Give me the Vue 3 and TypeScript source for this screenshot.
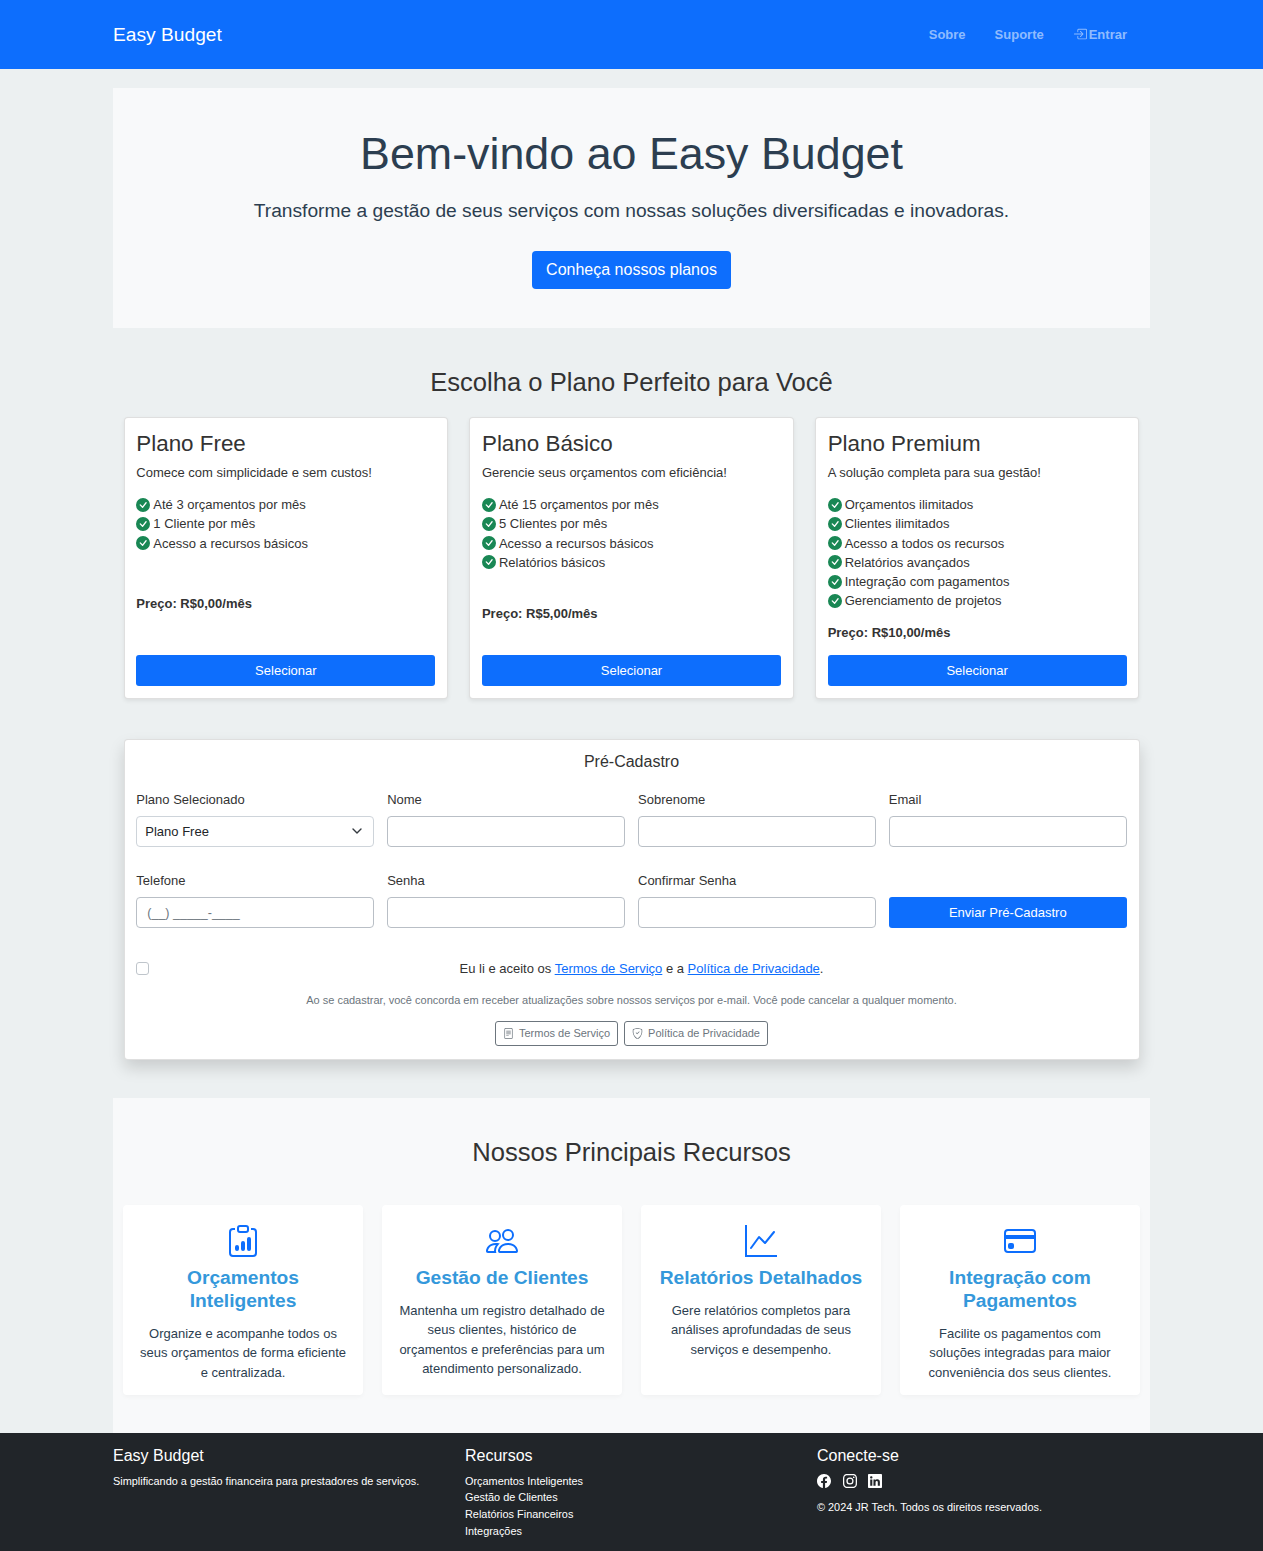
<script setup lang="ts">
const check = 'M16 8A8 8 0 1 1 0 8a8 8 0 0 1 16 0zm-3.97-3.03a.75.75 0 0 0-1.08.022L7.477 9.417 5.384 7.323a.75.75 0 0 0-1.06 1.06L6.97 11.03a.75.75 0 0 0 1.079-.02l3.992-4.99a.75.75 0 0 0-.01-1.05z'
const plans = [
  { name: 'Plano Free', desc: 'Comece com simplicidade e sem custos!', items: ['Até 3 orçamentos por mês', '1 Cliente por mês', 'Acesso a recursos básicos'], price: 'Preço: R$0,00/mês' },
  { name: 'Plano Básico', desc: 'Gerencie seus orçamentos com eficiência!', items: ['Até 15 orçamentos por mês', '5 Clientes por mês', 'Acesso a recursos básicos', 'Relatórios básicos'], price: 'Preço: R$5,00/mês' },
  { name: 'Plano Premium', desc: 'A solução completa para sua gestão!', items: ['Orçamentos ilimitados', 'Clientes ilimitados', 'Acesso a todos os recursos', 'Relatórios avançados', 'Integração com pagamentos', 'Gerenciamento de projetos'], price: 'Preço: R$10,00/mês' },
]
const features = [
  { title: 'Orçamentos Inteligentes', text: 'Organize e acompanhe todos os seus orçamentos de forma eficiente e centralizada.', paths: ['M4 11a1 1 0 1 1 2 0v1a1 1 0 1 1-2 0v-1zm6-4a1 1 0 1 1 2 0v5a1 1 0 1 1-2 0V7zM7 9a1 1 0 0 1 2 0v3a1 1 0 1 1-2 0V9z', 'M4 1.5H3a2 2 0 0 0-2 2V14a2 2 0 0 0 2 2h10a2 2 0 0 0 2-2V3.5a2 2 0 0 0-2-2h-1v1h1a1 1 0 0 1 1 1V14a1 1 0 0 1-1 1H3a1 1 0 0 1-1-1V3.5a1 1 0 0 1 1-1h1v-1z', 'M9.5 1a.5.5 0 0 1 .5.5v1a.5.5 0 0 1-.5.5h-3a.5.5 0 0 1-.5-.5v-1a.5.5 0 0 1 .5-.5h3zm-3-1A1.5 1.5 0 0 0 5 1.5v1A1.5 1.5 0 0 0 6.5 4h3A1.5 1.5 0 0 0 11 2.5v-1A1.5 1.5 0 0 0 9.5 0h-3z'] },
  { title: 'Gestão de Clientes', text: 'Mantenha um registro detalhado de seus clientes, histórico de orçamentos e preferências para um atendimento personalizado.', paths: ['M15 14s1 0 1-1-1-4-5-4-5 3-5 4 1 1 1 1h8Zm-7.978-1A.261.261 0 0 1 7 12.996c.001-.264.167-1.03.76-1.72C8.312 10.629 9.282 10 11 10c1.717 0 2.687.63 3.24 1.276.593.69.758 1.457.76 1.72l-.008.002a.274.274 0 0 1-.014.002H7.022ZM11 7a2 2 0 1 0 0-4 2 2 0 0 0 0 4Zm3-2a3 3 0 1 1-6 0 3 3 0 0 1 6 0ZM6.936 9.28a5.88 5.88 0 0 0-1.23-.247A7.35 7.35 0 0 0 5 9c-4 0-5 3-5 4 0 .667.333 1 1 1h4.216A2.238 2.238 0 0 1 5 13c0-1.01.377-2.042 1.09-2.904.243-.294.526-.569.846-.816ZM4.92 10A5.493 5.493 0 0 0 4 13H1c0-.26.164-1.03.76-1.724.545-.636 1.492-1.256 3.16-1.275ZM1.5 5.5a3 3 0 1 1 6 0 3 3 0 0 1-6 0Zm3-2a2 2 0 1 0 0 4 2 2 0 0 0 0-4Z'] },
  { title: 'Relatórios Detalhados', text: 'Gere relatórios completos para análises aprofundadas de seus serviços e desempenho.', paths: ['M0 0h1v15h15v1H0V0Zm14.817 3.113a.5.5 0 0 1 .07.704l-4.5 5.5a.5.5 0 0 1-.74.037L7.06 6.767l-3.656 5.027a.5.5 0 0 1-.808-.588l4-5.5a.5.5 0 0 1 .758-.06l2.609 2.61 4.15-5.073a.5.5 0 0 1 .704-.07Z'] },
  { title: 'Integração com Pagamentos', text: 'Facilite os pagamentos com soluções integradas para maior conveniência dos seus clientes.', paths: ['M0 4a2 2 0 0 1 2-2h12a2 2 0 0 1 2 2v8a2 2 0 0 1-2 2H2a2 2 0 0 1-2-2V4zm2-1a1 1 0 0 0-1 1v1h14V4a1 1 0 0 0-1-1H2zm13 4H1v5a1 1 0 0 0 1 1h12a1 1 0 0 0 1-1V7z', 'M2 10a1 1 0 0 1 1-1h1a1 1 0 0 1 1 1v1a1 1 0 0 1-1 1H3a1 1 0 0 1-1-1v-1z'] },
]
const socials = [
  'M16 8.049c0-4.446-3.582-8.05-8-8.05C3.58 0-.002 3.603-.002 8.05c0 4.017 2.926 7.347 6.75 7.951v-5.625h-2.03V8.05H6.75V6.275c0-2.017 1.195-3.131 3.022-3.131.876 0 1.791.157 1.791.157v1.98h-1.009c-.993 0-1.303.621-1.303 1.258v1.51h2.218l-.354 2.326H9.25V16c3.824-.604 6.75-3.934 6.75-7.951z',
  'M8 0C5.829 0 5.556.01 4.703.048 3.85.088 3.269.222 2.76.42a3.917 3.917 0 0 0-1.417.923A3.927 3.927 0 0 0 .42 2.76C.222 3.268.087 3.85.048 4.7.01 5.555 0 5.827 0 8.001c0 2.172.01 2.444.048 3.297.04.852.174 1.433.372 1.942.205.526.478.972.923 1.417.444.445.89.719 1.416.923.51.198 1.09.333 1.942.372C5.555 15.99 5.827 16 8 16s2.444-.01 3.298-.048c.851-.04 1.434-.174 1.943-.372a3.916 3.916 0 0 0 1.416-.923c.445-.445.718-.891.923-1.417.197-.509.332-1.09.372-1.942C15.99 10.445 16 10.173 16 8s-.01-2.445-.048-3.299c-.04-.851-.175-1.433-.372-1.941a3.926 3.926 0 0 0-.923-1.417A3.911 3.911 0 0 0 13.24.42c-.51-.198-1.092-.333-1.943-.372C10.443.01 10.172 0 7.998 0h.003zm-.717 1.442h.718c2.136 0 2.389.007 3.232.046.78.035 1.204.166 1.486.275.373.145.64.319.92.599.28.28.453.546.598.92.11.281.24.705.275 1.485.039.843.047 1.096.047 3.231s-.008 2.389-.047 3.232c-.035.78-.166 1.203-.275 1.485a2.47 2.47 0 0 1-.599.919c-.28.28-.546.453-.92.598-.28.11-.704.24-1.485.276-.843.038-1.096.047-3.232.047s-2.39-.009-3.233-.047c-.78-.036-1.203-.166-1.485-.276a2.478 2.478 0 0 1-.92-.598 2.48 2.48 0 0 1-.6-.92c-.109-.281-.24-.705-.275-1.485-.038-.843-.046-1.096-.046-3.233 0-2.136.008-2.388.046-3.231.036-.78.166-1.204.276-1.486.145-.373.319-.64.599-.92.28-.28.546-.453.92-.598.282-.11.705-.24 1.485-.276.738-.034 1.024-.044 2.515-.045v.002zm4.988 1.328a.96.96 0 1 0 0 1.92.96.96 0 0 0 0-1.92zm-4.27 1.122a4.109 4.109 0 1 0 0 8.217 4.109 4.109 0 0 0 0-8.217zm0 1.441a2.667 2.667 0 1 1 0 5.334 2.667 2.667 0 0 1 0-5.334z',
  'M0 1.146C0 .513.526 0 1.175 0h13.65C15.474 0 16 .513 16 1.146v13.708c0 .633-.526 1.146-1.175 1.146H1.175C.526 16 0 15.487 0 14.854V1.146zm4.943 12.248V6.169H2.542v7.225h2.401zm-1.2-8.212c.837 0 1.358-.554 1.358-1.248-.015-.709-.52-1.248-1.342-1.248-.822 0-1.359.54-1.359 1.248 0 .694.521 1.248 1.327 1.248h.016zm4.908 8.212V9.359c0-.216.016-.432.08-.586.173-.431.568-.878 1.232-.878.869 0 1.216.662 1.216 1.634v3.865h2.401V9.25c0-2.22-1.184-3.252-2.764-3.252-1.274 0-1.845.7-2.165 1.193v.025h-.016a5.54 5.54 0 0 1 .016-.025V6.169h-2.4c.03.678 0 7.225 0 7.225h2.4z',
]
const fields = ['Nome', 'Sobrenome', 'Email']
const links = ['Orçamentos Inteligentes', 'Gestão de Clientes', 'Relatórios Financeiros', 'Integrações']
</script>

<template>
  <div class="page">
    <nav class="navbar">
      <a class="brand" href="#">Easy Budget</a>
      <div class="nav-links">
        <a href="#">Sobre</a>
        <a href="#">Suporte</a>
        <a href="#" class="enter">
          <svg width="14" height="14" viewBox="0 0 16 16" fill="currentColor"><path d="M6 3.5a.5.5 0 0 1 .5-.5h8a.5.5 0 0 1 .5.5v9a.5.5 0 0 1-.5.5h-8a.5.5 0 0 1-.5-.5v-2a.5.5 0 0 0-1 0v2A1.5 1.5 0 0 0 6.5 14h8a1.5 1.5 0 0 0 1.5-1.5v-9A1.5 1.5 0 0 0 14.5 2h-8A1.5 1.5 0 0 0 5 3.5v2a.5.5 0 0 0 1 0v-2z" /><path d="M11.854 8.354a.5.5 0 0 0 0-.708l-3-3a.5.5 0 1 0-.708.708L10.293 7.5H1.5a.5.5 0 0 0 0 1h8.793l-2.147 2.146a.5.5 0 0 0 .708.708l3-3z" /></svg>
          Entrar
        </a>
      </div>
    </nav>

    <main class="main">
      <section class="hero">
        <h1>Bem-vindo ao Easy Budget</h1>
        <p class="lead">Transforme a gestão de seus serviços com nossas soluções diversificadas e inovadoras.</p>
        <a class="hero-btn" href="#">Conheça nossos planos</a>
      </section>

      <h2 class="plans-title">Escolha o Plano Perfeito para Você</h2>
      <div class="plans">
        <article v-for="p in plans" :key="p.name" class="plan">
          <h3>{{ p.name }}</h3>
          <p class="plan-desc">{{ p.desc }}</p>
          <ul>
            <li v-for="it in p.items" :key="it">
              <svg width="14" height="14" viewBox="0 0 16 16" fill="#198754"><path :d="check" /></svg>
              <span>{{ it }}</span>
            </li>
          </ul>
          <div class="price-wrap"><strong>{{ p.price }}</strong></div>
          <a class="btn-primary" href="#">Selecionar</a>
        </article>
      </div>

      <section class="form-wrap">
        <form class="form-card" @submit.prevent>
          <h4>Pré-Cadastro</h4>
          <div class="form-grid">
            <div class="field">
              <label>Plano Selecionado</label>
              <div class="select">
                <span>Plano Free</span>
                <svg width="16" height="16" viewBox="0 0 16 16" fill="none" stroke="#343a40" stroke-width="1.4" stroke-linecap="round" stroke-linejoin="round"><path d="m4 6 4 4 4-4" /></svg>
              </div>
            </div>
            <div v-for="f in fields" :key="f" class="field">
              <label>{{ f }}</label>
              <input class="input" type="text" />
            </div>
            <div class="field">
              <label>Telefone</label>
              <input class="input phone" type="text" value="(__) _____-____" />
            </div>
            <div class="field">
              <label>Senha</label>
              <input class="input" type="password" />
            </div>
            <div class="field">
              <label>Confirmar Senha</label>
              <input class="input" type="password" />
            </div>
            <div class="field end">
              <button class="btn-primary" type="submit">Enviar Pré-Cadastro</button>
            </div>
          </div>
          <div class="terms">
            <span class="checkbox"></span>
            <span class="terms-text">Eu li e aceito os <a href="#">Termos de Serviço</a> e a <a href="#">Política de Privacidade</a>.</span>
          </div>
          <p class="notice">Ao se cadastrar, você concorda em receber atualizações sobre nossos serviços por e-mail. Você pode cancelar a qualquer momento.</p>
          <div class="doc-buttons">
            <a href="#">
              <svg width="11" height="11" viewBox="0 0 16 16" fill="currentColor"><path d="M5 4a.5.5 0 0 0 0 1h6a.5.5 0 0 0 0-1H5zm-.5 2.5A.5.5 0 0 1 5 6h6a.5.5 0 0 1 0 1H5a.5.5 0 0 1-.5-.5zM5 8a.5.5 0 0 0 0 1h6a.5.5 0 0 0 0-1H5zm0 2a.5.5 0 0 0 0 1h3a.5.5 0 0 0 0-1H5z" /><path d="M2 2a2 2 0 0 1 2-2h8a2 2 0 0 1 2 2v12a2 2 0 0 1-2 2H4a2 2 0 0 1-2-2V2zm10-1H4a1 1 0 0 0-1 1v12a1 1 0 0 0 1 1h8a1 1 0 0 0 1-1V2a1 1 0 0 0-1-1z" /></svg>
              Termos de Serviço
            </a>
            <a href="#">
              <svg width="11" height="11" viewBox="0 0 16 16" fill="currentColor"><path d="M5.338 1.59a61.44 61.44 0 0 0-2.837.856.481.481 0 0 0-.328.39c-.554 4.157.726 7.19 2.253 9.188a10.725 10.725 0 0 0 2.287 2.233c.346.244.652.42.893.533.12.057.218.095.293.118a.55.55 0 0 0 .101.025.615.615 0 0 0 .1-.025c.076-.023.174-.061.294-.118.24-.113.547-.29.893-.533a10.726 10.726 0 0 0 2.287-2.233c1.527-1.997 2.807-5.031 2.253-9.188a.48.48 0 0 0-.328-.39c-.651-.213-1.75-.56-2.837-.855C9.552 1.29 8.531 1.067 8 1.067c-.53 0-1.552.223-2.662.524zM5.072.56C6.157.265 7.31 0 8 0s1.843.265 2.928.56c1.11.3 2.229.655 2.887.87a1.54 1.54 0 0 1 1.044 1.262c.596 4.477-.787 7.795-2.465 9.99a11.775 11.775 0 0 1-2.517 2.453 7.159 7.159 0 0 1-1.048.625c-.28.132-.581.24-.829.24s-.548-.108-.829-.24a7.158 7.158 0 0 1-1.048-.625 11.777 11.777 0 0 1-2.517-2.453C1.928 10.487.545 7.169 1.141 2.692A1.54 1.54 0 0 1 2.185 1.43 62.456 62.456 0 0 1 5.072.56z" /><path d="M10.854 5.146a.5.5 0 0 1 0 .708l-3 3a.5.5 0 0 1-.708 0l-1.5-1.5a.5.5 0 1 1 .708-.708L7.5 7.793l2.646-2.647a.5.5 0 0 1 .708 0z" /></svg>
              Política de Privacidade
            </a>
          </div>
        </form>
      </section>

      <section class="features">
        <h2>Nossos Principais Recursos</h2>
        <div class="feature-grid">
          <article v-for="f in features" :key="f.title" class="feature">
            <svg width="32" height="32" viewBox="0 0 16 16" fill="#0d6efd"><path v-for="d in f.paths" :key="d" :d="d" /></svg>
            <h3>{{ f.title }}</h3>
            <p>{{ f.text }}</p>
          </article>
        </div>
      </section>
    </main>

    <footer class="footer">
      <div class="foot-col">
        <h5>Easy Budget</h5>
        <p>Simplificando a gestão financeira para prestadores de serviços.</p>
      </div>
      <div class="foot-col">
        <h5>Recursos</h5>
        <a v-for="l in links" :key="l" href="#">{{ l }}</a>
      </div>
      <div class="foot-col">
        <h5>Conecte-se</h5>
        <div class="socials">
          <svg v-for="s in socials" :key="s" width="14" height="14" viewBox="0 0 16 16" fill="#fff"><path :d="s" /></svg>
        </div>
        <p class="copy">© 2024 JR Tech. Todos os direitos reservados.</p>
      </div>
    </footer>
  </div>
</template>

<style>
html, body { margin: 0; background: #ecf0f1; }
</style>

<style scoped>
.page { font-family: "Liberation Sans", Arial, sans-serif; font-size: 13px; line-height: 19.2px; color: #333; min-height: 1551px; display: flex; flex-direction: column; }
a { text-decoration: none; }
h1, h2, h3, h4, h5, p, ul { margin: 0; padding: 0; font-weight: 400; }

.navbar { height: 69px; box-sizing: border-box; background: #0d6efd; padding: 0 136px 0 113px; display: flex; align-items: center; justify-content: space-between; }
.brand { color: #fff; font-size: 19.2px; }
.nav-links { display: flex; gap: 29px; }
.nav-links a { color: rgba(255, 255, 255, .55); font-weight: 700; font-size: 13px; }
.enter { display: flex; align-items: center; gap: 2px; }

.main { flex: 1; padding: 19px 113px 0; display: flex; flex-direction: column; }
.hero { background: #f8f9fa; padding: 37px 0 39px; text-align: center; color: #2c3e50; display: flex; flex-direction: column; align-items: center; }
.hero h1 { font-size: 44.8px; line-height: 56px; }
.lead { font-size: 19.2px; line-height: 28px; margin-top: 16px; }
.hero-btn { margin-top: 26px; height: 38px; box-sizing: border-box; padding: 0 14px; background: #0d6efd; color: #fff; border-radius: 4px; font-size: 16px; line-height: 38px; }

.plans-title { margin-top: 39px; text-align: center; font-size: 25.6px; line-height: 31px; }
.plans { margin: 19px 10.5px 0; display: grid; grid-template-columns: repeat(3, 1fr); gap: 21px; }
.plan { background: #fff; border: 1px solid rgba(0, 0, 0, .125); border-radius: 4px; padding: 12px 11.8px; box-shadow: 0 2px 4px rgba(0, 0, 0, .075); display: flex; flex-direction: column; }
.plan h3 { font-size: 22.4px; line-height: 27px; }
.plan-desc { margin-top: 6px; }
.plan ul { list-style: none; margin-top: 13px; }
.plan li { display: flex; align-items: center; gap: 3px; }
.price-wrap { flex: 1; padding: 12.8px 0 12.2px; display: flex; align-items: center; }
.btn-primary { display: block; width: 100%; height: 31px; box-sizing: border-box; border: 0; background: #0d6efd; color: #fff; border-radius: 3px; text-align: center; font: inherit; line-height: 31px; padding: 0; }

.form-wrap { margin: 40px 10.5px 0; }
.form-card { background: #fff; border: 1px solid rgba(0, 0, 0, .125); border-radius: 4px; padding: 12px 11.8px 13px; box-shadow: 0 8px 16px rgba(0, 0, 0, .15); }
.form-card h4 { text-align: center; font-size: 16px; line-height: 19px; }
.form-grid { margin-top: 19px; display: grid; grid-template-columns: repeat(4, 1fr); column-gap: 13px; row-gap: 24px; }
.field { display: flex; flex-direction: column; gap: 7px; }
.field.end { justify-content: flex-end; }
.input, .select { height: 31px; box-sizing: border-box; width: 100%; border: 1px solid #b9bfc6; border-radius: 4px; background: #fff; font: inherit; color: #212529; padding: 0 8px; outline: none; }
.select { display: flex; align-items: center; justify-content: space-between; border-color: #ced4da; }
.phone { color: #6c757d; font-size: 12.5px; padding-left: 10px; }
.terms { margin-top: 31px; display: flex; align-items: center; }
.checkbox { width: 13px; height: 13px; box-sizing: border-box; border: 1px solid #bfc5cb; border-radius: 3px; flex: none; }
.terms-text { flex: 1; margin-left: 7px; text-align: center; }
.terms-text a { color: #0d6efd; text-decoration: underline; }
.notice { margin-top: 15px; text-align: center; color: #6c757d; font-size: 11px; line-height: 14px; }
.doc-buttons { margin-top: 14px; display: flex; justify-content: center; gap: 6px; }
.doc-buttons a { height: 25px; box-sizing: border-box; border: 1px solid #6c757d; border-radius: 3px; color: #6c757d; font-size: 11px; display: flex; align-items: center; gap: 5px; padding: 0 7px; }

.features { margin-top: 38px; background: #f8f9fa; padding: 39px 10px 38px; }
.features h2 { text-align: center; font-size: 25.6px; line-height: 31px; }
.feature-grid { margin-top: 37px; display: grid; grid-template-columns: repeat(4, 1fr); gap: 19px; }
.feature { background: #fff; border-radius: 4px; padding: 20px 12px 13px; text-align: center; color: #2c3e50; box-shadow: 0 2px 4px rgba(0, 0, 0, .03); }
.feature svg { display: block; margin: 0 auto; }
.feature h3 { margin-top: 9px; color: #3498db; font-weight: 700; font-size: 19.2px; line-height: 23px; }
.feature p { margin-top: 12px; }

.footer { height: 118px; box-sizing: border-box; background: #212529; color: #fff; padding: 13px 0 0 113px; display: grid; grid-template-columns: repeat(3, 352px); font-size: 10.9px; line-height: 16.8px; }
.foot-col { display: flex; flex-direction: column; }
.foot-col h5 { font-size: 16px; line-height: 20px; margin-bottom: 6.5px; }
.foot-col a { color: #fff; }
.socials { display: flex; gap: 11.5px; padding-top: 1px; height: 16px; }
.copy { margin-top: 9px; }
</style>
